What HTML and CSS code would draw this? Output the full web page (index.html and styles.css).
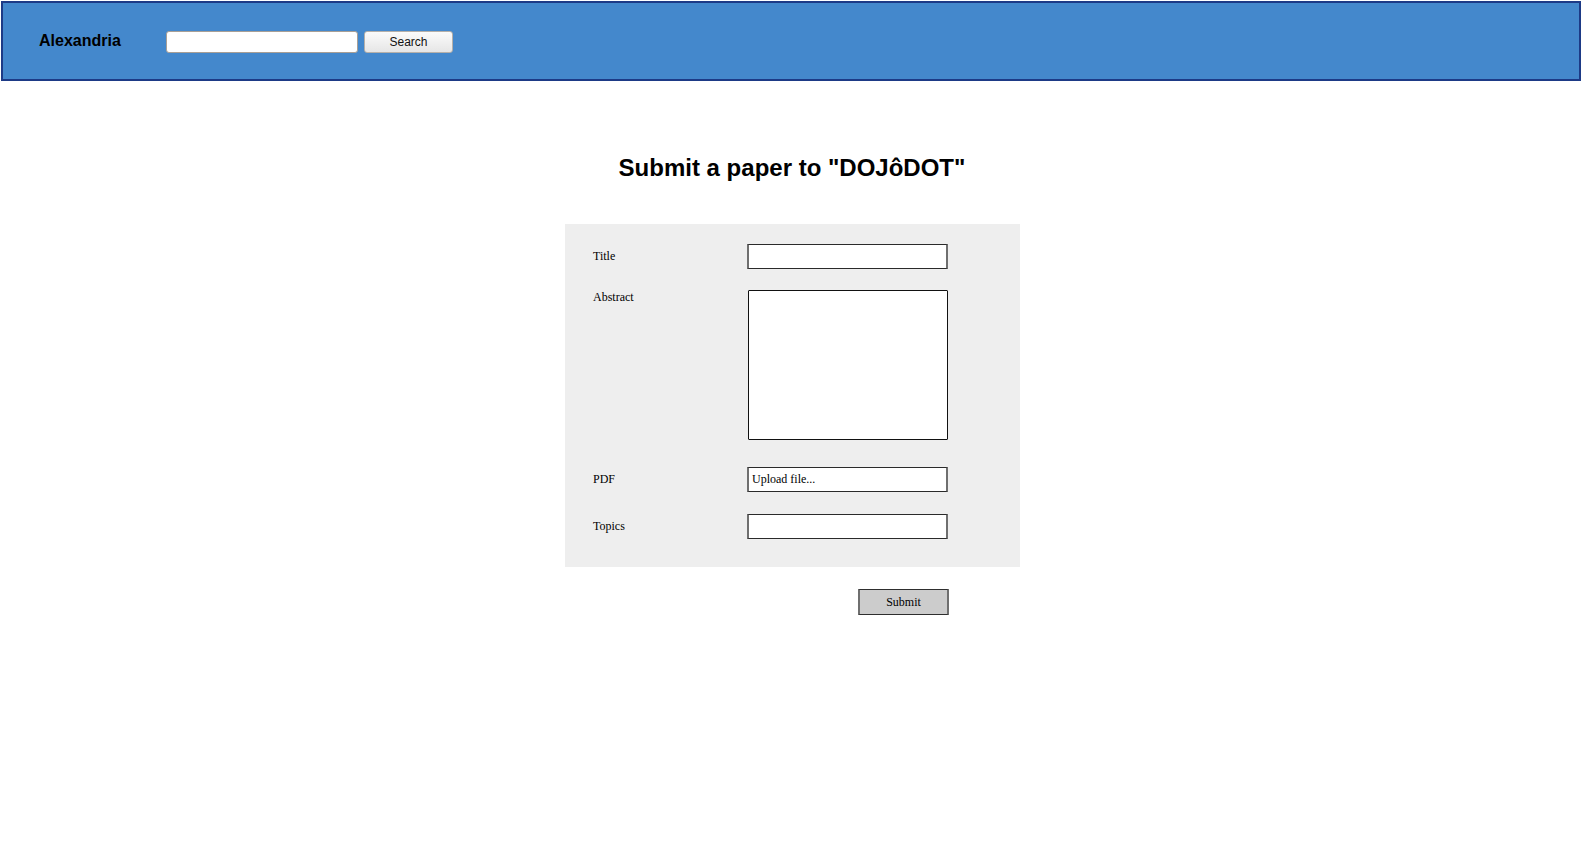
FILE: index.html
```html
<!DOCTYPE html>
<html lang="en">
<head>
<meta charset="utf-8">
<title>Alexandria - Submit a paper</title>
<link rel="stylesheet" href="styles.css">
</head>
<body>
<header class="topbar">
  <div class="brand">Alexandria</div>
  <input class="search-input" type="text">
  <button class="search-btn" type="button">Search</button>
</header>
<main class="page">
  <h1 class="page-title">Submit a paper to "DOJôDOT"</h1>
  <form class="panel">
    <div class="row">
      <span class="label">Title</span>
      <input class="field" type="text">
    </div>
    <div class="row row-top">
      <span class="label">Abstract</span>
      <textarea class="field area"></textarea>
    </div>
    <div class="row row-pdf">
      <span class="label">PDF</span>
      <div class="field upload">Upload file...</div>
    </div>
    <div class="row row-topics">
      <span class="label">Topics</span>
      <input class="field" type="text">
    </div>
  </form>
  <div class="actions">
    <button class="submit" type="button">Submit</button>
  </div>
</main>
</body>
</html>
```

FILE: styles.css
```css
* { box-sizing: border-box; }

html, body {
  margin: 0;
  padding: 0;
  background: #ffffff;
  font-family: "Liberation Sans", Arial, sans-serif;
  color: #000;
}

.topbar {
  margin: 1px 1px 0 1px;
  height: 80px;
  background: #4488cc;
  border: 2px solid #1d3a86;
  display: flex;
  align-items: center;
  padding-left: 36px;
}

.brand {
  font-size: 16px;
  font-weight: bold;
  width: 127px;
  margin-top: 0;
}

.search-input {
  width: 192px;
  height: 22px;
  border: 1px solid #a89f96;
  border-radius: 3px;
  background: #fff;
  margin: 1px 0 0 0;
  padding: 0 4px;
  outline: none;
}

.search-btn {
  width: 89px;
  height: 22px;
  margin: 1px 0 0 6px;
  border: 1px solid #b5b0aa;
  border-radius: 3px;
  background: linear-gradient(#fbfbfb, #e6e6e6);
  font-family: "Liberation Sans", Arial, sans-serif;
  font-size: 12px;
  color: #111;
  padding: 0;
}

.page-title {
  margin: 73px 0 0 2px;
  text-align: center;
  font-size: 24px;
  line-height: 28px;
  font-weight: bold;
}

.panel {
  width: 455px;
  margin: 42px 0 0 calc(50% - 226px);
  background: #eeeeee;
  padding: 20px 0 28px 28px;
  display: flex;
  flex-direction: column;
  gap: 21px;
}

.row {
  display: flex;
  align-items: center;
}

.row-top { align-items: flex-start; }
.row-pdf { margin-top: 6px; }
.row-topics { margin-top: 1px; }

.label {
  width: 154px;
  font-family: "Liberation Serif", "Times New Roman", serif;
  font-size: 12px;
  line-height: 14px;
  margin-top: -1px;
}

.row-top .label { margin-top: 0; }

.field {
  width: 201px;
  height: 25px;
  background: #fff;
  border: 1px solid #2a2a2a;
  border-left: 2px solid #6f6f6f;
  border-right: 2px solid #6f6f6f;
  border-radius: 1px;
  margin: 0;
  padding: 0 3px;
  font-family: "Liberation Serif", "Times New Roman", serif;
  font-size: 12px;
  outline: none;
}

.area {
  width: 200px;
  height: 150px;
  margin-left: 1px;
  border: 1px solid #111;
  resize: none;
  display: block;
}

.upload {
  display: flex;
  align-items: center;
  color: #000;
}

.actions {
  width: 455px;
  margin: 22px 0 0 calc(50% - 226px);
  display: flex;
  justify-content: flex-end;
  padding-right: 71px;
}

.submit {
  width: 91px;
  height: 26px;
  background: #cccccc;
  border: 1px solid #2e2e2e;
  border-left: 2px solid #6f6f6f;
  border-right: 2px solid #6f6f6f;
  border-radius: 1px;
  font-family: "Liberation Serif", "Times New Roman", serif;
  font-size: 12px;
  color: #000;
  padding: 1px 0 0 0;
}
```
